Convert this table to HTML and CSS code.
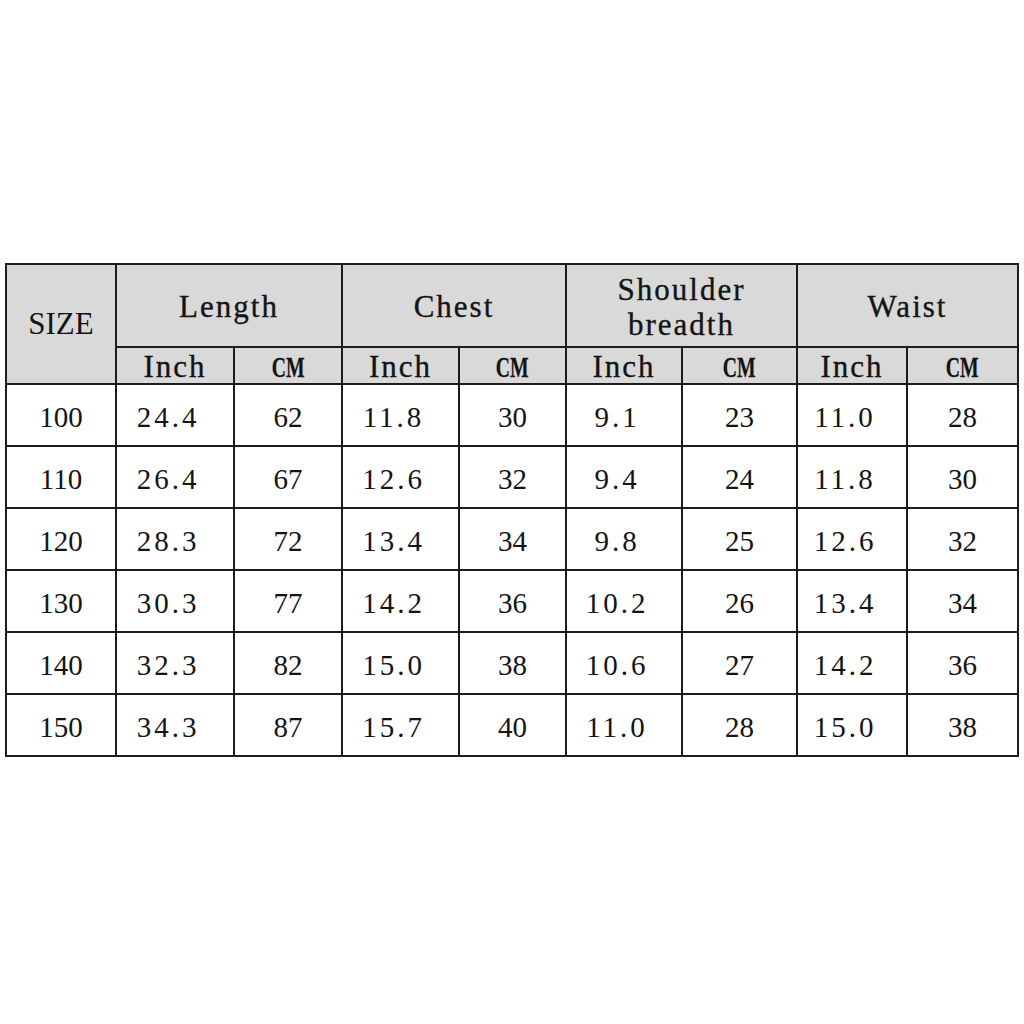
FILE: index.html
```html
<!DOCTYPE html>
<html>
<head>
<meta charset="utf-8">
<link rel="stylesheet" href="styles.css">
</head>
<body>
<div class="page">
<table class="size-table">
  <colgroup>
    <col class="c-size">
    <col class="c-a"><col class="c-b">
    <col class="c-c"><col class="c-d">
    <col class="c-e"><col class="c-f">
    <col class="c-g"><col class="c-h">
  </colgroup>
  <thead>
    <tr class="head-1">
      <th rowspan="2" class="size-label">SIZE</th>
      <th colspan="2" class="word">Length</th>
      <th colspan="2" class="word">Chest</th>
      <th colspan="2" class="word">Shoulder<br>breadth</th>
      <th colspan="2" class="word">Waist</th>
    </tr>
    <tr class="head-2">
      <th class="word">Inch</th><th><span class="cm">CM</span></th>
      <th class="word">Inch</th><th><span class="cm">CM</span></th>
      <th class="word">Inch</th><th><span class="cm">CM</span></th>
      <th class="word">Inch</th><th><span class="cm">CM</span></th>
    </tr>
  </thead>
  <tbody>
    <tr><td>100</td><td class="dec">24.4</td><td>62</td><td class="dec">11.8</td><td>30</td><td class="dec">9.1</td><td>23</td><td class="dec">11.0</td><td>28</td></tr>
    <tr><td>110</td><td class="dec">26.4</td><td>67</td><td class="dec">12.6</td><td>32</td><td class="dec">9.4</td><td>24</td><td class="dec">11.8</td><td>30</td></tr>
    <tr><td>120</td><td class="dec">28.3</td><td>72</td><td class="dec">13.4</td><td>34</td><td class="dec">9.8</td><td>25</td><td class="dec">12.6</td><td>32</td></tr>
    <tr><td>130</td><td class="dec">30.3</td><td>77</td><td class="dec">14.2</td><td>36</td><td class="dec">10.2</td><td>26</td><td class="dec">13.4</td><td>34</td></tr>
    <tr><td>140</td><td class="dec">32.3</td><td>82</td><td class="dec">15.0</td><td>38</td><td class="dec">10.6</td><td>27</td><td class="dec">14.2</td><td>36</td></tr>
    <tr><td>150</td><td class="dec">34.3</td><td>87</td><td class="dec">15.7</td><td>40</td><td class="dec">11.0</td><td>28</td><td class="dec">15.0</td><td>38</td></tr>
  </tbody>
</table>
</div>
</body>
</html>
```
FILE: styles.css
```css
html, body {
  margin: 0;
  padding: 0;
  background: #ffffff;
}
.page {
  width: 1024px;
  height: 1024px;
  padding: 263px 0 0 5px;
  box-sizing: border-box;
}
.size-table {
  border-collapse: collapse;
  table-layout: fixed;
  width: 1012px;
  font-family: "Liberation Serif", "Times New Roman", serif;
  color: #141414;
}
.c-size { width: 110px; }
.c-a { width: 118px; }
.c-b { width: 108px; }
.c-c { width: 117px; }
.c-d { width: 107px; }
.c-e { width: 116px; }
.c-f { width: 115px; }
.c-g { width: 110px; }
.c-h { width: 111px; }

.size-table th,
.size-table td {
  border: 2px solid #1c1c1c;
  padding: 0;
  text-align: center;
  vertical-align: middle;
  overflow: hidden;
}
.size-table th {
  background: #d9d9d9;
  font-weight: normal;
}
.head-1 { height: 83px; }
.head-2 { height: 37px; }
.size-table tbody tr { height: 62px; }

.size-label {
  font-size: 31px;
  padding-top: 4px;
}
.word {
  font-size: 31px;
  letter-spacing: 2px;
  line-height: 35px;
  -webkit-text-stroke: 0.35px #141414;
}
.head-1 .word {
  padding-top: 2px;
}
.head-2 th {
  font-size: 28px;
  line-height: 30px;
  padding-top: 2px;
}
.head-2 th.word {
  font-size: 31px;
}
.cm {
  display: inline-block;
  vertical-align: top;
  font-weight: bold;
  font-size: 29px;
  line-height: 30px;
  transform: scaleX(0.68);
  -webkit-text-stroke: 0.3px #141414;
}
.size-table td {
  font-size: 29px;
  line-height: 34px;
  padding-top: 4px;
}
.size-table td.dec {
  letter-spacing: 3px;
  padding-right: 14px;
}
```
